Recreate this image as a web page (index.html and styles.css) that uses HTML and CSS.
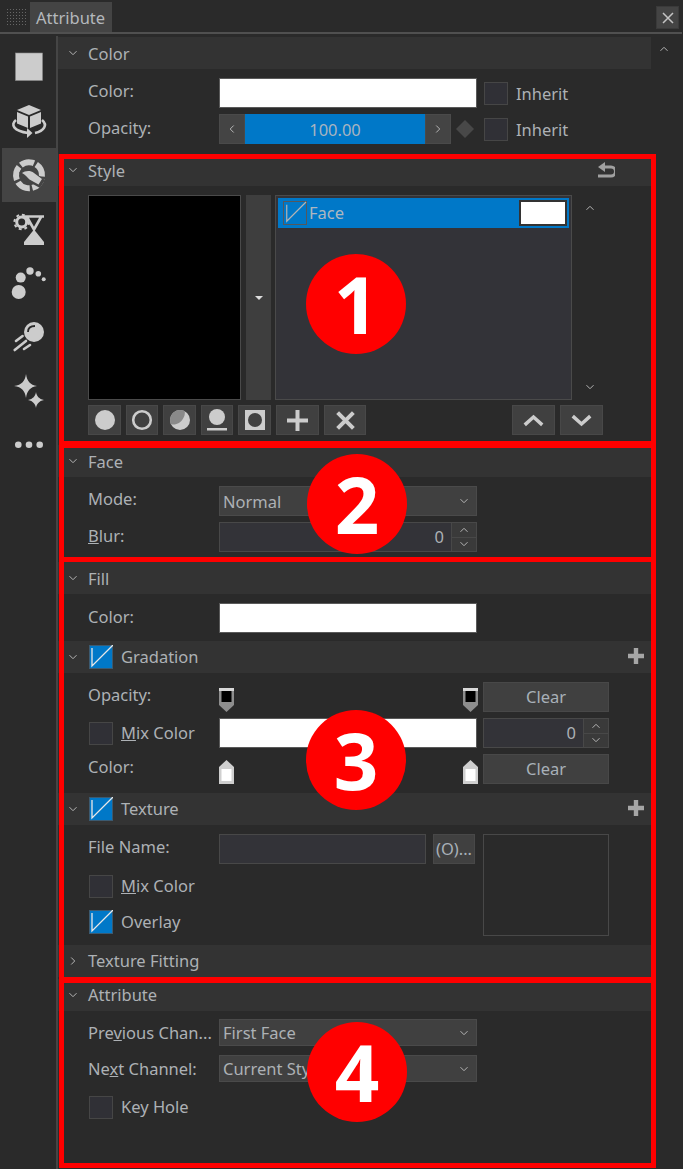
FILE: index.html
```html
<!DOCTYPE html>
<html lang="en">
<head>
<meta charset="utf-8">
<title>Attribute</title>
<link rel="stylesheet" href="styles.css">
</head>
<body>
<svg class="defs" width="0" height="0" aria-hidden="true">
  <symbol id="down" viewBox="0 0 10 6"><path d="M1.5 1.2 5 4.7 8.5 1.2" fill="none" stroke="#b5b5b5" stroke-width="1"/></symbol>
  <symbol id="up" viewBox="0 0 10 6"><path d="M1.5 4.8 5 1.3 8.5 4.8" fill="none" stroke="#b5b5b5" stroke-width="1"/></symbol>
  <symbol id="right" viewBox="0 0 10 10"><path d="M3.2 1.5 6.7 5 3.2 8.5" fill="none" stroke="#b5b5b5" stroke-width="1"/></symbol>
  <symbol id="left" viewBox="0 0 10 10"><path d="M6.7 1.5 3.2 5 6.7 8.5" fill="none" stroke="#b5b5b5" stroke-width="1"/></symbol>
  <symbol id="plus" viewBox="0 0 18 18"><path d="M9 1v16M1 9h16" stroke="#a6a6a6" stroke-width="4.4" fill="none"/></symbol>
  <symbol id="tick" viewBox="0 0 24 24"><rect x="0" y="0" width="24" height="24" fill="#0078c8"/><rect x=".5" y=".5" width="23" height="23" fill="none" stroke="#3c5a70" stroke-width="1"/><path d="M3 3v18L24 0" fill="none" stroke="#e8e8e8" stroke-width="1.300"/></symbol>
  <symbol id="mk-top" viewBox="0 0 15 24"><path d="M0 0h15v17l-7.500 7L0 17z" fill="#8e8e8e"/><path d="M0 0h15v3H0z" fill="#d8d8d8"/><rect x="2.500" y="3" width="10" height="11" fill="#000"/></symbol>
  <symbol id="mk-bot" viewBox="0 0 15 24"><path d="M7.500 0 15 7v17H0V7z" fill="#cfcfcf"/><rect x="2.500" y="9" width="10" height="12" fill="#fff"/></symbol>
</svg>

<div class="panel">
  <header class="titlebar">
    <div class="grip"></div>
    <div class="tab">Attribute</div>
    <button class="close"><svg width="14" height="14" viewBox="0 0 14 14"><path d="M2 2l10 10M12 2 2 12" stroke="#c4c4c4" stroke-width="1.500"/></svg></button>
  </header>

  <div class="main">
    <nav class="sidebar">
      <div class="navitem"><svg viewBox="0 0 56 54"><rect x="15.500" y="13" width="27" height="27.500" fill="#ccc" stroke="#8a8a8a" stroke-width=".6"/></svg></div>
      <div class="navitem"><svg viewBox="0 0 56 54"><path d="M29 11l12 5-12 5-12-5z" fill="#ccc"/><path d="M17 18l11 4.600V34l-11-4.500z" fill="#ccc"/><path d="M30 22.600 41 18v11.500L30 34z" fill="#ccc"/><path d="M16 26c-6 5-2 11 12 13M42 26c6 5 2 11-7 13" fill="none" stroke="#ccc" stroke-width="2.600"/><path d="M27 34l5.500 5-5.500 5z" fill="#ccc"/></svg></div>
      <div class="navitem active"><svg viewBox="0 0 56 54"><circle cx="29" cy="27.300" r="13" fill="none" stroke="#ccc" stroke-width="6" stroke-dasharray="13.800 2.540" transform="rotate(14 29 27.300)"/><path d="M19 25c3-4 10-5 15-1l11 8-5 8-11-6c-3-2-4-5-10-9z" fill="#444"/><path d="M22 25c3-2 8-3 12 0l8 6-3.500 5.500-9-5c-2-1.500-4-5-7.500-6.500z" fill="#ccc"/></svg></div>
      <div class="navitem"><svg viewBox="0 0 56 54"><circle cx="21.700" cy="20" r="5" fill="none" stroke="#ccc" stroke-width="3"/><circle cx="21.700" cy="20" r="7.300" fill="none" stroke="#ccc" stroke-width="2" stroke-dasharray="2.900 2.830"/><path d="M24 14.500h20M27 15l7 12.500L41 15" fill="none" stroke="#ccc" stroke-width="2.600"/><path d="M34 27.500 44 40v3H24v-3z" fill="#ccc"/></svg></div>
      <div class="navitem"><svg viewBox="0 0 56 54"><circle cx="18.700" cy="36" r="7" fill="#ccc"/><circle cx="20.700" cy="21.600" r="5" fill="#ccc"/><circle cx="30" cy="15" r="3.700" fill="#ccc"/><circle cx="38.300" cy="17.700" r="2.800" fill="#ccc"/><circle cx="43.700" cy="23.300" r="2" fill="#ccc"/></svg></div>
      <div class="navitem"><svg viewBox="0 0 56 54"><circle cx="34" cy="22" r="10" fill="#ccc"/><path d="M28 22c0-4 3-6 7-6" fill="none" stroke="#2a2a2a" stroke-width="1.800"/><path d="M16 31l6.600-5M14.700 40 26 31M24 39l6-4" stroke="#ccc" stroke-width="2.600" stroke-linecap="round"/></svg></div>
      <div class="navitem"><svg viewBox="0 0 56 54"><path d="M26 10c1 7 4 11 11 12-7 1-10 5-11 12-1-7-4-11-12-12 8-1 11-5 12-12z" fill="#ccc"/><path d="M36 28c.6 4 3 7 8 8-5 1-7.400 4-8 8-.6-4-3-7-8-8 5-1 7.400-4 8-8z" fill="#ccc"/></svg></div>
      <div class="navitem"><svg viewBox="0 0 56 54"><circle cx="18.300" cy="26.700" r="3.300" fill="#ccc"/><circle cx="29" cy="26.700" r="3.300" fill="#ccc"/><circle cx="39.700" cy="26.700" r="3.300" fill="#ccc"/></svg></div>
    </nav>

    <div class="content">
      <section>
        <div class="head low"><svg class="chev"><use href="#down"/></svg><span>Color</span></div>
        <div class="body b-color">
          <div class="row"><label>Color:</label><div class="swatch w258"></div><div class="check ml7"></div><span class="lbl inh">Inherit</span></div>
          <div class="row"><label class="lb1">Opacity:</label>
            <div class="slider"><div class="sbtn"><svg class="ico10"><use href="#left"/></svg></div><div class="sval">100.00</div><div class="sbtn"><svg class="ico10"><use href="#right"/></svg></div></div>
            <svg class="diamond" viewBox="0 0 18 18"><path d="M9 0l9 9-9 9-9-9z" fill="#484848"/></svg>
            <div class="check ml10"></div><span class="lbl inh">Inherit</span></div>
        </div>
      </section>

      <section>
        <div class="head low"><svg class="chev"><use href="#down"/></svg><span>Style</span>
          <svg class="undo" viewBox="0 0 18 16"><path d="M4 5h10a3 3 0 0 1 0 9H1" fill="none" stroke="#a0a0a0" stroke-width="3"/><path d="M8 0v10L1 5z" fill="#a0a0a0"/></svg></div>
        <div class="body b-style">
          <div class="stylerow">
            <div class="preview"></div>
            <div class="dropbtn"><svg width="8" height="4" viewBox="0 0 8 4"><path d="M0 0h8L4 4z" fill="#ddd"/></svg></div>
            <div class="list"><div class="item"><div class="itemcheck"><svg viewBox="0 0 24 24"><path d="M3 3v18L24 0" fill="none" stroke="#b4b4b4" stroke-width="1.300"/></svg></div><span>Face</span><div class="itemswatch"></div></div></div>
            <div class="listscroll"><svg class="ico-ud"><use href="#up"/></svg><svg class="ico-ud"><use href="#down"/></svg></div>
          </div>
          <div class="toolrow">
            <div class="tool t33"><svg viewBox="0 0 24 24"><circle cx="12" cy="12" r="10" fill="#ccc"/></svg></div>
            <div class="tool t32"><svg viewBox="0 0 24 24"><circle cx="12" cy="12" r="8.800" fill="none" stroke="#ccc" stroke-width="2.600"/></svg></div>
            <div class="tool t33"><svg viewBox="0 0 24 24"><circle cx="12" cy="12" r="10" fill="#ccc"/><path d="M12 2A10 10 0 0 0 3 16.300 12 12 0 0 0 16.800 3.200 10 10 0 0 0 12 2z" fill="#8a8a8a"/></svg></div>
            <div class="tool t32"><svg viewBox="0 0 24 24"><circle cx="12" cy="9" r="8" fill="#ccc"/><rect x="2" y="20" width="20" height="2.500" fill="#ccc"/></svg></div>
            <div class="tool t33"><svg viewBox="0 0 24 24"><rect x="2" y="2" width="20" height="20" fill="#ccc"/><circle cx="12" cy="12" r="7" fill="#404040"/></svg></div>
            <div class="tool t43"><svg viewBox="0 0 20 20"><path d="M10 0v20M0 10h20" stroke="#ccc" stroke-width="3.800"/></svg></div>
            <div class="tool t42"><svg viewBox="0 0 20 20"><path d="M2.500 2.500l15 15M17.500 2.500l-15 15" stroke="#ccc" stroke-width="3.800"/></svg></div>
            <div class="spacer"></div>
            <div class="tool t43"><svg viewBox="0 0 24 14"><path d="M2 12 12 3l10 9" fill="none" stroke="#ccc" stroke-width="4"/></svg></div>
            <div class="tool t43"><svg viewBox="0 0 24 14"><path d="M2 2l10 9 10-9" fill="none" stroke="#ccc" stroke-width="4"/></svg></div>
          </div>
        </div>
      </section>

      <section>
        <div class="head low"><svg class="chev"><use href="#down"/></svg><span>Face</span></div>
        <div class="body b-face">
          <div class="row"><label>Mode:</label><div class="select w258 sel-low"><span>Normal</span><svg class="sel-ar"><use href="#down"/></svg></div></div>
          <div class="row"><label class="lb1"><u>B</u>lur:</label><div class="num w258"><span>0</span><div class="steps"><div class="step"><svg class="ico-ud"><use href="#up"/></svg></div><div class="step"><svg class="ico-ud"><use href="#down"/></svg></div></div></div></div>
        </div>
      </section>

      <section>
        <div class="head low"><svg class="chev"><use href="#down"/></svg><span>Fill</span></div>
        <div class="body b-fill">
          <div class="row"><label class="lb1">Color:</label><div class="swatch w258"></div></div>
        </div>
      </section>

      <section>
        <div class="head"><svg class="chev"><use href="#down"/></svg><svg class="headcheck"><use href="#tick"/></svg><span class="hc-text">Gradation</span><svg class="headplus"><use href="#plus"/></svg></div>
        <div class="body b-grad">
          <div class="row"><label>Opacity:</label><div class="track"><svg class="marker"><use href="#mk-top"/></svg><svg class="marker"><use href="#mk-top"/></svg></div><div class="button w126">Clear</div></div>
          <div class="row"><div class="check-cell"><div class="check"></div><span class="lbl"><u>M</u>ix Color</span></div><div class="swatch w258"></div><div class="num w126 ml6"><span>0</span><div class="steps"><div class="step"><svg class="ico-ud"><use href="#up"/></svg></div><div class="step"><svg class="ico-ud"><use href="#down"/></svg></div></div></div></div>
          <div class="row"><label>Color:</label><div class="track"><svg class="marker"><use href="#mk-bot"/></svg><svg class="marker"><use href="#mk-bot"/></svg></div><div class="button w126">Clear</div></div>
        </div>
      </section>

      <section>
        <div class="head"><svg class="chev"><use href="#down"/></svg><svg class="headcheck"><use href="#tick"/></svg><span class="hc-text">Texture</span><svg class="headplus"><use href="#plus"/></svg></div>
        <div class="body b-tex">
          <div class="texleft">
            <div class="row"><label>File Name:</label><div class="input w207"></div><div class="button w42 ml7">(O)...</div></div>
            <div class="row r24 mt10"><div class="check-cell"><div class="check"></div><span class="lbl"><u>M</u>ix Color</span></div></div>
            <div class="row r24 mt12"><div class="check-cell"><svg class="check-on"><use href="#tick"/></svg><span class="lbl">Overlay</span></div></div>
          </div>
          <div class="texbox"></div>
        </div>
      </section>

      <section class="tf">
        <div class="head"><svg class="chev"><use href="#right"/></svg><span>Texture Fitting</span></div>
      </section>

      <section>
        <div class="head"><svg class="chev"><use href="#down"/></svg><span>Attribute</span></div>
        <div class="body b-attr">
          <div class="row r27"><label class="lb0">Pre<u>v</u>ious Chan...</label><div class="select w258"><span>First Face</span><svg class="sel-ar"><use href="#down"/></svg></div></div>
          <div class="row r27 mt9"><label class="lb0">Ne<u>x</u>t Channel:</label><div class="select w258"><span>Current Style</span><svg class="sel-ar"><use href="#down"/></svg></div></div>
          <div class="row r24 mt13"><div class="check-cell"><div class="check"></div><span class="lbl">Key Hole</span></div></div>
        </div>
      </section>
    </div>

    <div class="vscroll"><svg class="ico-ud"><use href="#up"/></svg></div>
  </div>

  <div class="callout c1"></div>
  <div class="callout c2"></div>
  <div class="callout c3"></div>
  <div class="callout c4"></div>
  <div class="badge b1">1</div>
  <div class="badge b2">2</div>
  <div class="badge b3">3</div>
  <div class="badge b4">4</div>
</div>
</body>
</html>
```
FILE: styles.css
```css
* { box-sizing: border-box; }
html, body { margin: 0; padding: 0; }
body { background: #2a2a2a; color: #adb1b5; font: 16.5px/1 "Noto Sans", "Liberation Sans", sans-serif; }
.defs { position: absolute; }
.panel { position: relative; width: 683px; height: 1169px; overflow: hidden; background: #2a2a2a; }

.titlebar { height: 34px; display: flex; align-items: flex-start; border-bottom: 2px solid #505050; margin-right: 1px; position: relative; }
.grip { width: 20px; height: 18px; margin: 8px 4px 0 6px; background-image: radial-gradient(#666 .6px, transparent .8px); background-size: 3px 3px; }
.tab { width: 82px; height: 30px; margin-top: 2px; background: #444; color: #b4b8bc; padding-left: 6px; line-height: 31px; }
.close { margin: 6px 3px 0 auto; width: 23px; height: 23px; background: #444; border: 1px solid #3a3a3a; padding: 0; display: flex; align-items: center; justify-content: center; }

.main { display: flex; height: 1135px; }
.sidebar { width: 58px; flex: none; border-right: 2px solid #454545; padding-top: 4px; margin-top: 2px; }
.navitem { height: 54px; margin-left: 2px; width: 54px; }
.navitem svg { width: 56px; height: 54px; display: block; margin-left: -2px; }
.navitem.active { background: #444; }

.content { width: 593px; flex: none; padding-top: 3px; }
.vscroll { padding: 12px 0 0 8px; }

.head { height: 32px; background: #333; display: flex; align-items: center; position: relative; padding-left: 10px; color: #adb1b5; }
.head > span { padding-top: 1px; }
.head.low > span { padding-top: 3px; }
.chev { width: 10px; height: 6px; margin-right: 10px; flex: none; }
.tf .chev { height: 10px; }
.headcheck { width: 24px; height: 24px; margin: 0 8px 0 1px; flex: none; }
.headplus { width: 18px; height: 18px; margin: 0 6px 2px auto; }
.undo { width: 18px; height: 16px; margin: 0 36px 1px auto; }

.body { padding-left: 30px; }
.b-color { height: 85px; padding-top: 9px; display: flex; flex-direction: column; gap: 6px; }
.b-style { height: 259px; padding-top: 9px; }
.b-face { height: 85px; padding-top: 9px; display: flex; flex-direction: column; gap: 6px; }
.b-fill { height: 47px; padding-top: 9px; }
.b-grad { height: 120px; padding-top: 9px; display: flex; flex-direction: column; gap: 6px; }
.b-tex { height: 120px; padding-top: 9px; display: flex; }
.b-attr { padding-top: 8px; }
.tf { margin-bottom: 2px; }

.row { height: 30px; display: flex; align-items: center; }
.r27 { height: 27px; }
.r24 { height: 24px; }
.mt9 { margin-top: 9px; }
.mt10 { margin-top: 10px; }
.mt12 { margin-top: 12px; }
.mt13 { margin-top: 13px; }
.ml6 { margin-left: 6px; }
.ml7 { margin-left: 7px; }
.ml10 { margin-left: 10px; }
.w258 { width: 258px; }
.w207 { width: 207px; }
.w126 { width: 126px; }
.w42 { width: 42px; }

label { width: 131px; flex: none; white-space: nowrap; padding-bottom: 3px; }
label.lb1 { padding-bottom: 1px; }
label.lb0 { padding: 1px 0 0; }
.lbl { margin-left: 8px; white-space: nowrap; }
.lbl.inh { padding-top: 2px; }
.check-cell { width: 131px; flex: none; display: flex; align-items: center; padding-left: 1px; }
.check { width: 24px; height: 23px; background: #303036; border: 1px solid #464646; flex: none; }
.check-on { width: 24px; height: 24px; flex: none; }

.swatch { height: 30px; background: #fff; border: 1px solid #5a5a5a; flex: none; }
.slider { width: 232px; height: 30px; display: flex; background: #444; flex: none; }
.sbtn { width: 26px; background: #444; border: 1px solid #4a4a4a; display: flex; align-items: center; justify-content: center; }
.sval { flex: 1; background: #0078c8; text-align: center; line-height: 31px; color: #a8b4c0; }
.ico10 { width: 10px; height: 10px; }
.ico-ud { width: 10px; height: 6px; display: block; }
.diamond { width: 18px; height: 18px; margin-left: 5px; flex: none; }

.stylerow { display: flex; height: 205px; }
.preview { width: 153px; background: #000; border: 1px solid #4a4a4a; }
.dropbtn { width: 25px; margin-left: 5px; background: #3e3e3e; display: flex; align-items: center; justify-content: center; }
.list { width: 297px; margin-left: 4px; background: #333338; border: 1px solid #4a4a4a; padding: 2px; }
.item { height: 30px; background: #0078c8; display: flex; align-items: center; padding-left: 5px; }
.itemcheck { width: 24px; height: 24px; border: 1px solid #55585c; flex: none; }
.itemcheck svg { display: block; width: 22px; height: 22px; overflow: visible; }
.item span { margin-left: 2px; padding-top: 1px; color: #adb7c0; }
.itemswatch { width: 48px; height: 26px; margin-left: auto; margin-right: 2px; background: #fff; border: 2px solid #333; }
.listscroll { width: 36px; display: flex; flex-direction: column; justify-content: space-between; align-items: center; padding: 10px 0; }

.toolrow { display: flex; gap: 5px; margin-top: 5px; height: 30px; width: 515px; }
.tool { height: 30px; background: #404040; border: 1px solid #484848; display: flex; align-items: center; justify-content: center; flex: none; }
.tool svg { width: 24px; height: 24px; flex: none; }
.t33 { width: 33px; }
.t32 { width: 32px; }
.t43 { width: 43px; }
.t42 { width: 42px; }
.t43 svg, .t42 svg { width: 21px; height: 21px; }
.spacer { flex: 1; }

.select { height: 100%; background: #404040; border: 1px solid #4a4a4a; display: flex; align-items: center; padding: 0 7px 0 3px; flex: none; }
.select > span { padding-top: 1px; }
.sel-low > span { padding-top: 3px; }
.sel-ar { width: 10px; height: 6px; margin-left: auto; }
.num { height: 30px; background: #333338; border: 1px solid #484848; display: flex; align-items: center; justify-content: flex-end; flex: none; }
.num > span { margin-right: 7px; }
.steps { width: 25px; height: 100%; display: flex; flex-direction: column; border-left: 1px solid #484848; }
.step { flex: 1; background: #3a3a3a; display: flex; align-items: center; justify-content: center; }
.step + .step { border-top: 1px solid #484848; }
.input { height: 30px; background: #333338; border: 1px solid #484848; flex: none; }
.button { height: 30px; background: #404040; border: 1px solid #484848; text-align: center; line-height: 28px; flex: none; color: #a8b0b8; }

.track { width: 259px; flex: none; display: flex; justify-content: space-between; padding-top: 6px; height: 30px; margin-right: 5px; }
.marker { width: 15px; height: 24px; }
.texleft { width: 395px; }
.texbox { width: 126px; height: 102px; border: 1px solid #484848; }

.callout { position: absolute; left: 59px; width: 597px; border: 5px solid #f00; pointer-events: none; }
.c1 { top: 154px; height: 292px; }
.c2 { top: 443px; height: 119px; }
.c3 { top: 557px; height: 425px; }
.c4 { top: 978px; height: 190px; }

.badge { position: absolute; left: 306px; width: 100px; height: 100px; border-radius: 50%; background: #f00; color: #fff; font-weight: 700; font-size: 78px; line-height: 100px; text-align: center; }
.b1 { top: 254px; }
.b2 { top: 454px; left: 307px; }
.b3 { top: 710px; }
.b4 { top: 1022px; left: 307px; }
```
